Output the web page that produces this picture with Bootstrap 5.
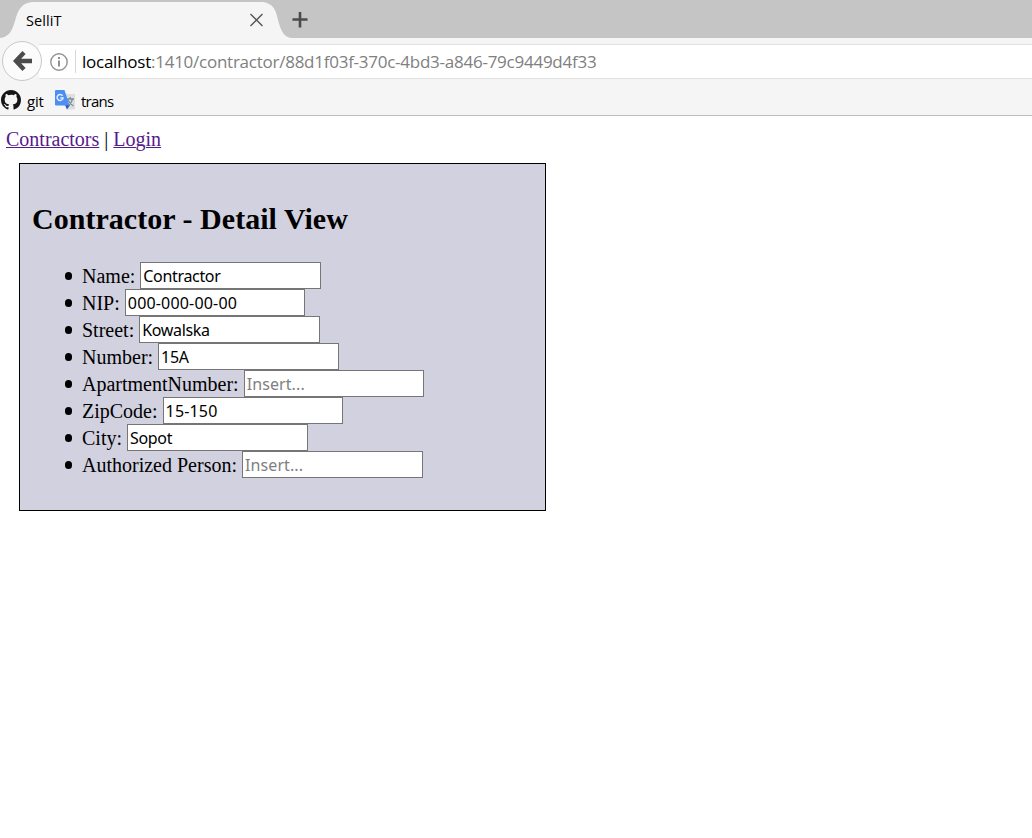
<!DOCTYPE html>
<html lang="en">
<head>
<meta charset="utf-8">
<meta name="viewport" content="width=device-width, initial-scale=1">
<title>SelliT</title>
<link href="https://cdn.jsdelivr.net/npm/bootstrap@5.3.0/dist/css/bootstrap.min.css" rel="stylesheet">
<style>
body{font-family:"Liberation Serif",serif;font-size:20px;line-height:23px;color:#000;background:#fff}
.browser{font-family:"Open Sans",sans-serif;background:#f5f5f5;height:116px;border-bottom:1px solid #bdbdbd}
.tabs{height:38px;background:#c5c5c5}
.tab-item{width:293px;height:38px}
.tab-shape{left:0;top:0}
.tab-title{left:26px;top:9px;font-size:14.5px;line-height:24px;letter-spacing:.1px}
.tab-close{left:249px;top:13px}
.tab-new{margin:12px 0 0 -1px}
.toolbar{height:47px;padding-top:3px}
.back{width:40px;height:40px;margin-left:2px;border:1px solid #c8c8c8;border-radius:50%;background:#fbfbfb}
.address{height:35px;margin-top:3px;margin-left:-3px;padding-left:11px;border:solid #e2e2e2;border-width:1px 0}
.divider{width:1px;height:23px;background:#d8d8d8;margin:0 6px 0 7px}
.url{font-size:17px;letter-spacing:-.25px;color:#808080;white-space:nowrap}
.url b{font-weight:400;color:#000}
.bookmarks{height:30px;padding-left:1px;font-size:15px;letter-spacing:-.2px;line-height:30px}
.bookmarks span{padding-top:1px}
.bookmarks .git-label{width:34px;padding-left:6px}
.bookmarks .trans-label{padding-left:5px;letter-spacing:-.75px}
.page{padding:12px 6px}
.page a{color:#551a8b;text-decoration-thickness:1px}
.panel{width:527px;height:348px;margin:12px 0 0 13px;padding:0 12px;border:1px solid #000;background:#d2d1df}
.panel h2{font-size:30px;font-weight:700;line-height:34px;letter-spacing:.03px;margin:38px 0 26px}
.fields{padding-left:50px;margin:0}
.fields li{position:relative;height:27px;line-height:28px}
.fields li::before{content:"";position:absolute;left:-17.5px;top:10px;width:7.5px;height:7.5px;border-radius:50%;background:#000}
.fields input{width:180.6px;height:27px;padding:1px 2px 0;border:1px solid #767676;border-radius:0;background:#fff;color:#000;font:16px "Noto Sans",sans-serif;letter-spacing:-.33px;vertical-align:top}
.fields input.numeric{letter-spacing:.18px}
.fields input::placeholder{color:#808080;opacity:1;letter-spacing:.1px}
</style>
<script src="https://cdn.jsdelivr.net/npm/bootstrap@5.3.0/dist/js/bootstrap.bundle.min.js"></script>
</head>
<body>
<header class="browser">
  <div class="tabs d-flex">
    <div class="tab-item position-relative">
      <svg class="tab-shape position-absolute" width="293" height="38"><path d="M0 38C9 37 12 31 15 21C18 9 22 2 35 2H260C273 2 276 10 278 20C281 31 284 38 293 38Z" fill="#f5f5f5"/></svg>
      <span class="tab-title position-absolute">SelliT</span>
      <svg class="tab-close position-absolute" width="15" height="14"><path d="M1.5 1L13.5 13M13.5 1L1.5 13" stroke="#555" stroke-width="1.4"/></svg>
    </div>
    <svg class="tab-new" width="16" height="16"><path d="M8 0V15.5M.5 7.5H15.5" stroke="#4b4b4b" stroke-width="2.6"/></svg>
  </div>
  <div class="toolbar d-flex">
    <div class="back d-flex align-items-center justify-content-center position-relative flex-shrink-0">
      <svg width="20" height="20" viewBox="0 0 20 20"><path d="M12 1.5L4 10L12 18.5M4.5 10H20" fill="none" stroke="#4b4b4b" stroke-width="4.4"/></svg>
    </div>
    <div class="address d-flex align-items-center bg-white flex-grow-1">
      <svg width="18" height="18" viewBox="0 0 18 18"><circle cx="9" cy="9" r="8.2" fill="none" stroke="#929292" stroke-width="1.4"/><path d="M9 4V6M9 7.5V13.5" stroke="#858585" stroke-width="1.8"/></svg>
      <span class="divider"></span>
      <span class="url"><b>localhost</b>:1410/contractor/88d1f03f-370c-4bd3-a846-79c9449d4f33</span>
    </div>
  </div>
  <div class="bookmarks d-flex align-items-center">
    <svg width="20" height="20" viewBox="0 0 16 16"><path fill="#171515" d="M8 0C3.58 0 0 3.58 0 8c0 3.54 2.29 6.53 5.47 7.59.4.07.55-.17.55-.38v-1.49c-2.01.37-2.53-.49-2.69-.94-.09-.23-.48-.94-.82-1.13-.28-.15-.68-.52-.01-.53.63-.01 1.08.58 1.23.82.72 1.21 1.87.87 2.33.66.07-.52.28-.87.51-1.07-1.78-.2-3.64-.89-3.64-3.95 0-.87.31-1.59.82-2.15-.08-.2-.36-1.02.08-2.12 0 0 .67-.21 2.2.82A7.5 7.5 0 0 1 8 3.86c.68 0 1.36.09 2 .27 1.53-1.04 2.2-.82 2.2-.82.44 1.1.16 1.92.08 2.12.51.56.82 1.27.82 2.15 0 3.07-1.87 3.75-3.65 3.95.29.25.54.73.54 1.48v2.2c0 .21.15.46.55.38A8 8 0 0 0 16 8c0-4.42-3.58-8-8-8Z"/></svg>
    <span class="git-label">git</span>
    <svg width="21" height="20" viewBox="0 0 21 20"><path d="M8 4H20V19.5H12Z" fill="#dedede"/><path d="M11.5 9H19M15.2 7V9M17.5 9Q16 14 12.5 16M13 10Q15 14 18.5 16" fill="none" stroke="#78909c" stroke-width="1.3"/><path d="M10 15H15L12 19.5Z" fill="#3055b5"/><path d="M1 0H9.5L14.5 15.5H1Q0 15.5 0 14.5V1Q0 0 1 0Z" fill="#4d8df6"/><path d="M7.6 5.8A3 3 0 1 0 8.1 8H5.3" fill="none" stroke="#e4edff" stroke-width="1.5"/></svg>
    <span class="trans-label">trans</span>
  </div>
</header>
<main class="page">
  <nav class="d-block"><a href="#">Contractors</a> | <a href="#">Login</a></nav>
  <section class="panel">
    <h2>Contractor - Detail View</h2>
    <ul class="fields list-unstyled">
      <li>Name: <input value="Contractor"></li>
      <li>NIP: <input class="numeric" value="000-000-00-00"></li>
      <li>Street: <input value="Kowalska"></li>
      <li>Number: <input value="15A"></li>
      <li>ApartmentNumber: <input placeholder="Insert..."></li>
      <li>ZipCode: <input class="numeric" value="15-150"></li>
      <li>City: <input value="Sopot"></li>
      <li>Authorized Person: <input placeholder="Insert..."></li>
    </ul>
  </section>
</main>
</body>
</html>
